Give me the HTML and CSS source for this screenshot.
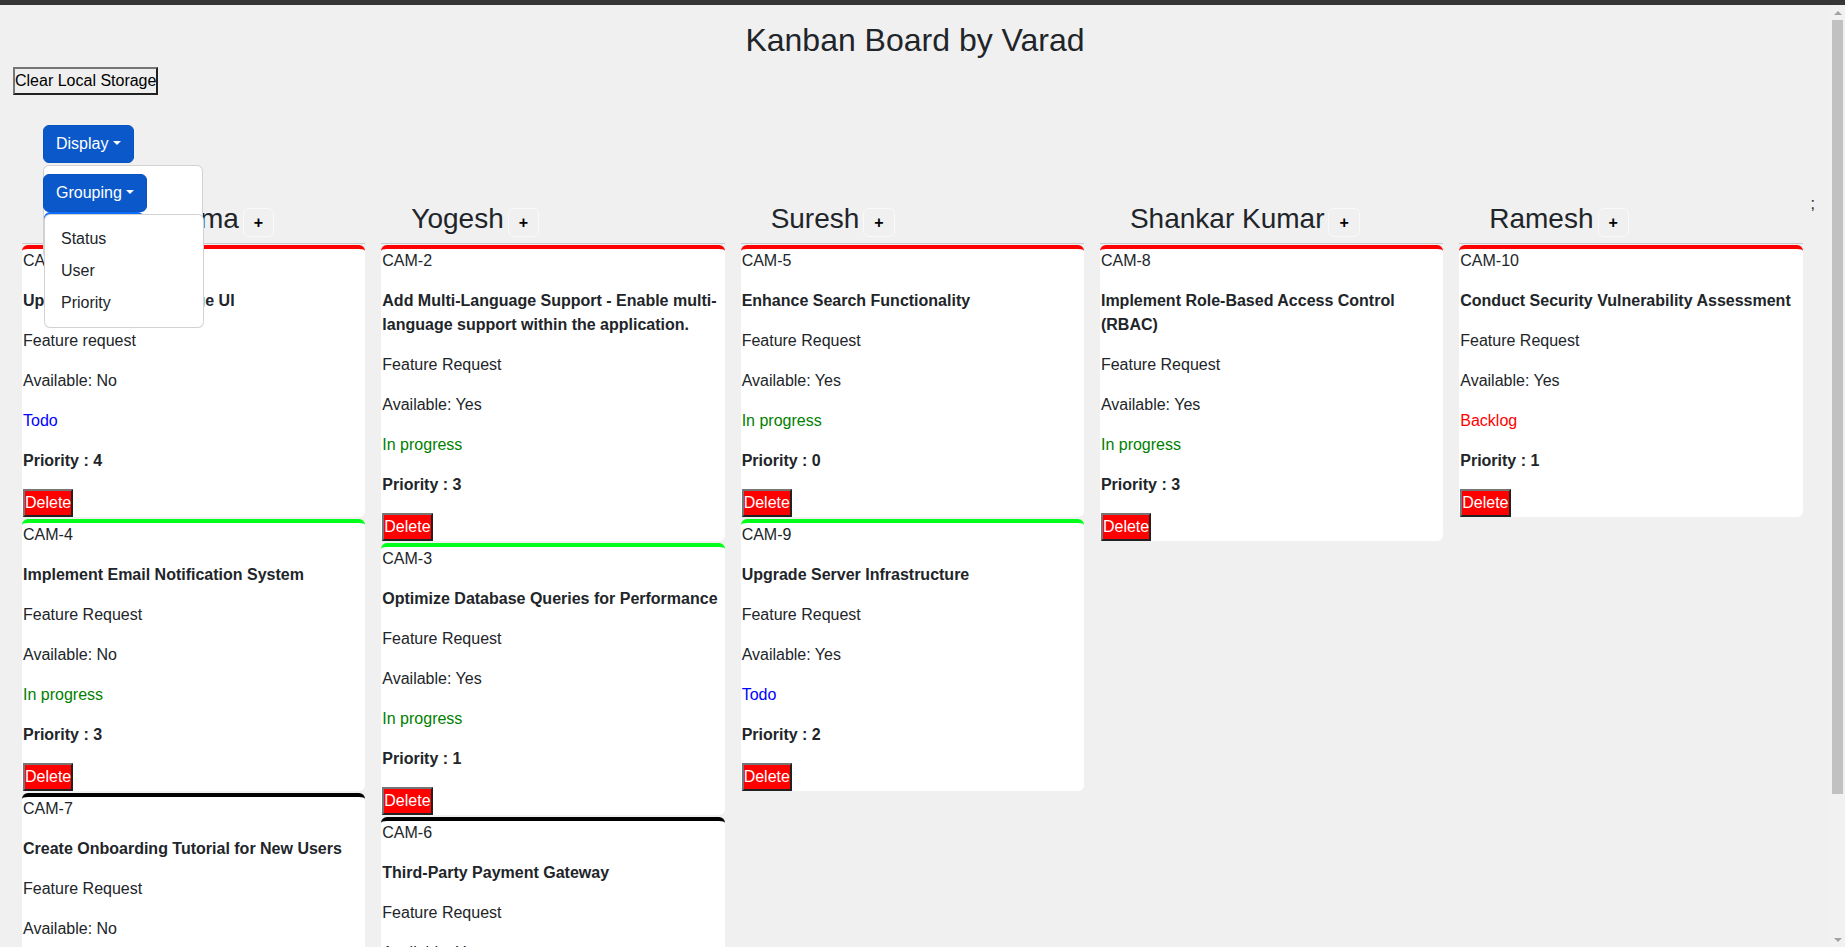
FILE: index.html
```html
<!DOCTYPE html>
<html lang="en">
<head>
<meta charset="utf-8">
<title>Kanban Board by Varad</title>
<link rel="stylesheet" href="styles.css">
</head>
<body>
<div class="topbar"></div>
<div class="page">
<div class="app">
  <h2 class="title">Kanban Board by Varad</h2>
  <div class="actions"><button class="clear-btn">Clear Local Storage</button></div>
  <div class="toolbar">
    <div class="dropdown">
      <button class="btn-primary show">Display<span class="caret"></span></button>
      <div class="menu menu-display">
        <div class="dropdown sub">
          <button class="btn-primary show grouping">Grouping<span class="caret"></span></button>
          <div class="menu menu-options">
            <a class="menu-item">Status</a>
            <a class="menu-item">User</a>
            <a class="menu-item">Priority</a>
          </div>
        </div>
        <div class="dropdown sub">
          <button class="btn-primary">Ordering<span class="caret"></span></button>
        </div>
      </div>
    </div>
  </div>

  <div class="board">
    <section class="column">
      <h3 class="col-head">Anoop Sharma<button class="add-btn">+</button></h3>
      <div class="cards">
        <div class="card top-red">
          <p>CAM-1</p>
          <p class="t-title">Update User Profile Page UI</p>
          <p>Feature request</p>
          <p>Available: No</p>
          <p class="s-todo">Todo</p>
          <p class="t-prio">Priority : 4</p>
          <button class="delete-btn">Delete</button>
        </div>
        <div class="card top-green">
          <p>CAM-4</p>
          <p class="t-title">Implement Email Notification System</p>
          <p>Feature Request</p>
          <p>Available: No</p>
          <p class="s-progress">In progress</p>
          <p class="t-prio">Priority : 3</p>
          <button class="delete-btn">Delete</button>
        </div>
        <div class="card top-black">
          <p>CAM-7</p>
          <p class="t-title">Create Onboarding Tutorial for New Users</p>
          <p>Feature Request</p>
          <p>Available: No</p>
          <p class="s-backlog">Backlog</p>
          <p class="t-prio">Priority : 2</p>
          <button class="delete-btn">Delete</button>
        </div>
      </div>
    </section>

    <section class="column">
      <h3 class="col-head">Yogesh<button class="add-btn">+</button></h3>
      <div class="cards">
        <div class="card top-red">
          <p>CAM-2</p>
          <p class="t-title">Add Multi-Language Support - Enable multi-language support within the application.</p>
          <p>Feature Request</p>
          <p>Available: Yes</p>
          <p class="s-progress">In progress</p>
          <p class="t-prio">Priority : 3</p>
          <button class="delete-btn">Delete</button>
        </div>
        <div class="card top-green">
          <p>CAM-3</p>
          <p class="t-title">Optimize Database Queries for Performance</p>
          <p>Feature Request</p>
          <p>Available: Yes</p>
          <p class="s-progress">In progress</p>
          <p class="t-prio">Priority : 1</p>
          <button class="delete-btn">Delete</button>
        </div>
        <div class="card top-black">
          <p>CAM-6</p>
          <p class="t-title">Third-Party Payment Gateway</p>
          <p>Feature Request</p>
          <p>Available: Yes</p>
          <p class="s-todo">Todo</p>
          <p class="t-prio">Priority : 1</p>
          <button class="delete-btn">Delete</button>
        </div>
      </div>
    </section>

    <section class="column">
      <h3 class="col-head">Suresh<button class="add-btn">+</button></h3>
      <div class="cards">
        <div class="card top-red">
          <p>CAM-5</p>
          <p class="t-title">Enhance Search Functionality</p>
          <p>Feature Request</p>
          <p>Available: Yes</p>
          <p class="s-progress">In progress</p>
          <p class="t-prio">Priority : 0</p>
          <button class="delete-btn">Delete</button>
        </div>
        <div class="card top-green">
          <p>CAM-9</p>
          <p class="t-title">Upgrade Server Infrastructure</p>
          <p>Feature Request</p>
          <p>Available: Yes</p>
          <p class="s-todo">Todo</p>
          <p class="t-prio">Priority : 2</p>
          <button class="delete-btn">Delete</button>
        </div>
      </div>
    </section>

    <section class="column">
      <h3 class="col-head">Shankar Kumar<button class="add-btn">+</button></h3>
      <div class="cards">
        <div class="card top-red">
          <p>CAM-8</p>
          <p class="t-title">Implement Role-Based Access Control (RBAC)</p>
          <p>Feature Request</p>
          <p>Available: Yes</p>
          <p class="s-progress">In progress</p>
          <p class="t-prio">Priority : 3</p>
          <button class="delete-btn">Delete</button>
        </div>
      </div>
    </section>

    <section class="column">
      <h3 class="col-head">Ramesh<button class="add-btn">+</button></h3>
      <div class="cards">
        <div class="card top-red">
          <p>CAM-10</p>
          <p class="t-title">Conduct Security Vulnerability Assessment</p>
          <p>Feature Request</p>
          <p>Available: Yes</p>
          <p class="s-backlog">Backlog</p>
          <p class="t-prio">Priority : 1</p>
          <button class="delete-btn">Delete</button>
        </div>
      </div>
    </section>
    <span class="semi">;</span>
  </div>
</div>
<div class="scrollbar" aria-hidden="true">
  <div class="sb-btn"><span class="arrow-up"></span></div>
  <div class="sb-track"><div class="sb-thumb"></div></div>
  <div class="sb-btn"><span class="arrow-down"></span></div>
</div>
</div>
</body>
</html>
```
FILE: styles.css
```css
* { box-sizing: border-box; }

html, body {
  margin: 0;
  height: 100%;
}

body {
  font-family: "Liberation Sans", Arial, sans-serif;
  font-size: 16px;
  line-height: 1.5;
  color: #212529;
  background: #f0f0f0;
  display: flex;
  flex-direction: column;
  overflow: hidden;
}

.topbar {
  flex: none;
  height: 5px;
  background: #363636;
}

.page {
  flex: 1 1 auto;
  min-height: 0;
  display: flex;
}

.app {
  flex: 1 1 auto;
  min-width: 0;
  overflow: hidden;
  background: #f0f0f0;
}

/* classic scrollbar */
.scrollbar {
  flex: none;
  width: 15px;
  display: flex;
  flex-direction: column;
  background: #f1f1f1;
}

.sb-btn {
  flex: none;
  height: 15px;
  display: flex;
  align-items: center;
  justify-content: center;
}

.arrow-up,
.arrow-down {
  width: 0;
  height: 0;
  border-left: 4px solid transparent;
  border-right: 4px solid transparent;
}

.arrow-up { border-bottom: 4px solid #a3a3a3; margin-top: 1px; }
.arrow-down { border-top: 4px solid #a3a3a3; }

.sb-track {
  flex: 1 1 auto;
  padding: 0 2px;
}

.sb-thumb {
  height: 774px;
  background: #c1c1c1;
}

.title {
  margin: 0 0 8px;
  padding-top: 16px;
  font-size: 32px;
  line-height: 38.4px;
  font-weight: 400;
  text-align: center;
}

.actions {
  display: flex;
  padding-left: 13px;
}

.clear-btn {
  font: inherit;
  line-height: 24px;
  padding: 0;
  margin: 0;
  border: 2px outset #767676;
  background: #efefef;
  color: #000;
}

.toolbar {
  display: flex;
  margin: 30px 0 0 43px;
}

.dropdown {
  position: relative;
  display: flex;
}

.btn-primary {
  font: inherit;
  line-height: 24px;
  margin: 0;
  padding: 6px 12px;
  border: 1px solid #0d6efd;
  border-radius: 6px;
  background: #0d6efd;
  color: #fff;
  white-space: nowrap;
}

.btn-primary.show {
  background: #0a58ca;
  border-color: #0a53be;
}

.caret {
  display: inline-block;
  margin-left: .255em;
  vertical-align: .255em;
  border-top: .3em solid;
  border-right: .3em solid transparent;
  border-bottom: 0;
  border-left: .3em solid transparent;
}

.menu {
  position: absolute;
  top: calc(100% + 2px);
  left: 0;
  width: 160px;
  padding: 8px 0;
  background: #fff;
  border: 1px solid rgba(0, 0, 0, .175);
  border-radius: 6px;
  z-index: 1000;
}

.menu-display {
  display: flex;
  flex-direction: column;
  align-items: flex-start;
}

.grouping {
  margin-left: -1px;
}

.menu-options {
  z-index: 1001;
}

.menu-item {
  display: block;
  padding: 4px 16px;
  color: #212529;
  white-space: nowrap;
}

.board {
  display: flex;
  align-items: flex-start;
  margin-top: 29px;
  padding: 0 15px 22px 14px;
}

.column {
  flex: 1 1 0;
  min-width: 0;
  padding: 10px 8px 0;
}

.col-head {
  margin: 0 0 6px 30px;
  font-size: 28px;
  line-height: 33.6px;
  font-weight: 400;
  white-space: nowrap;
}

.add-btn {
  margin: 0 0 0 4px;
  padding: 4px 10px;
  font-family: inherit;
  font-size: 16px;
  font-weight: 700;
  line-height: 19px;
  border: 1px solid #fafafa;
  border-radius: 6px;
  background: transparent;
  color: #000;
  vertical-align: baseline;
}

.cards {
  border-top: 1px solid #c9c9c9;
  padding-top: 1px;
}

.card {
  background: #fff;
  border-top: 4px solid #000;
  border-radius: 6px;
  padding: 0 1px;
  margin-bottom: 2px;
}

.top-red { border-top-color: #ff0000; }
.top-green { border-top-color: #00ff1a; }
.top-black { border-top-color: #000; }

.card p {
  margin: 0 0 16px;
}

.t-title,
.t-prio {
  font-weight: 700;
}

.s-todo { color: #0000ff; }
.s-progress { color: #008000; }
.s-backlog { color: #ff0000; }

.delete-btn {
  display: block;
  font: inherit;
  line-height: 24px;
  margin: 0;
  padding: 0;
  border: 2px outset #767676;
  background: #ff0000;
  color: #fff;
}

.semi {
  flex: none;
}
```
